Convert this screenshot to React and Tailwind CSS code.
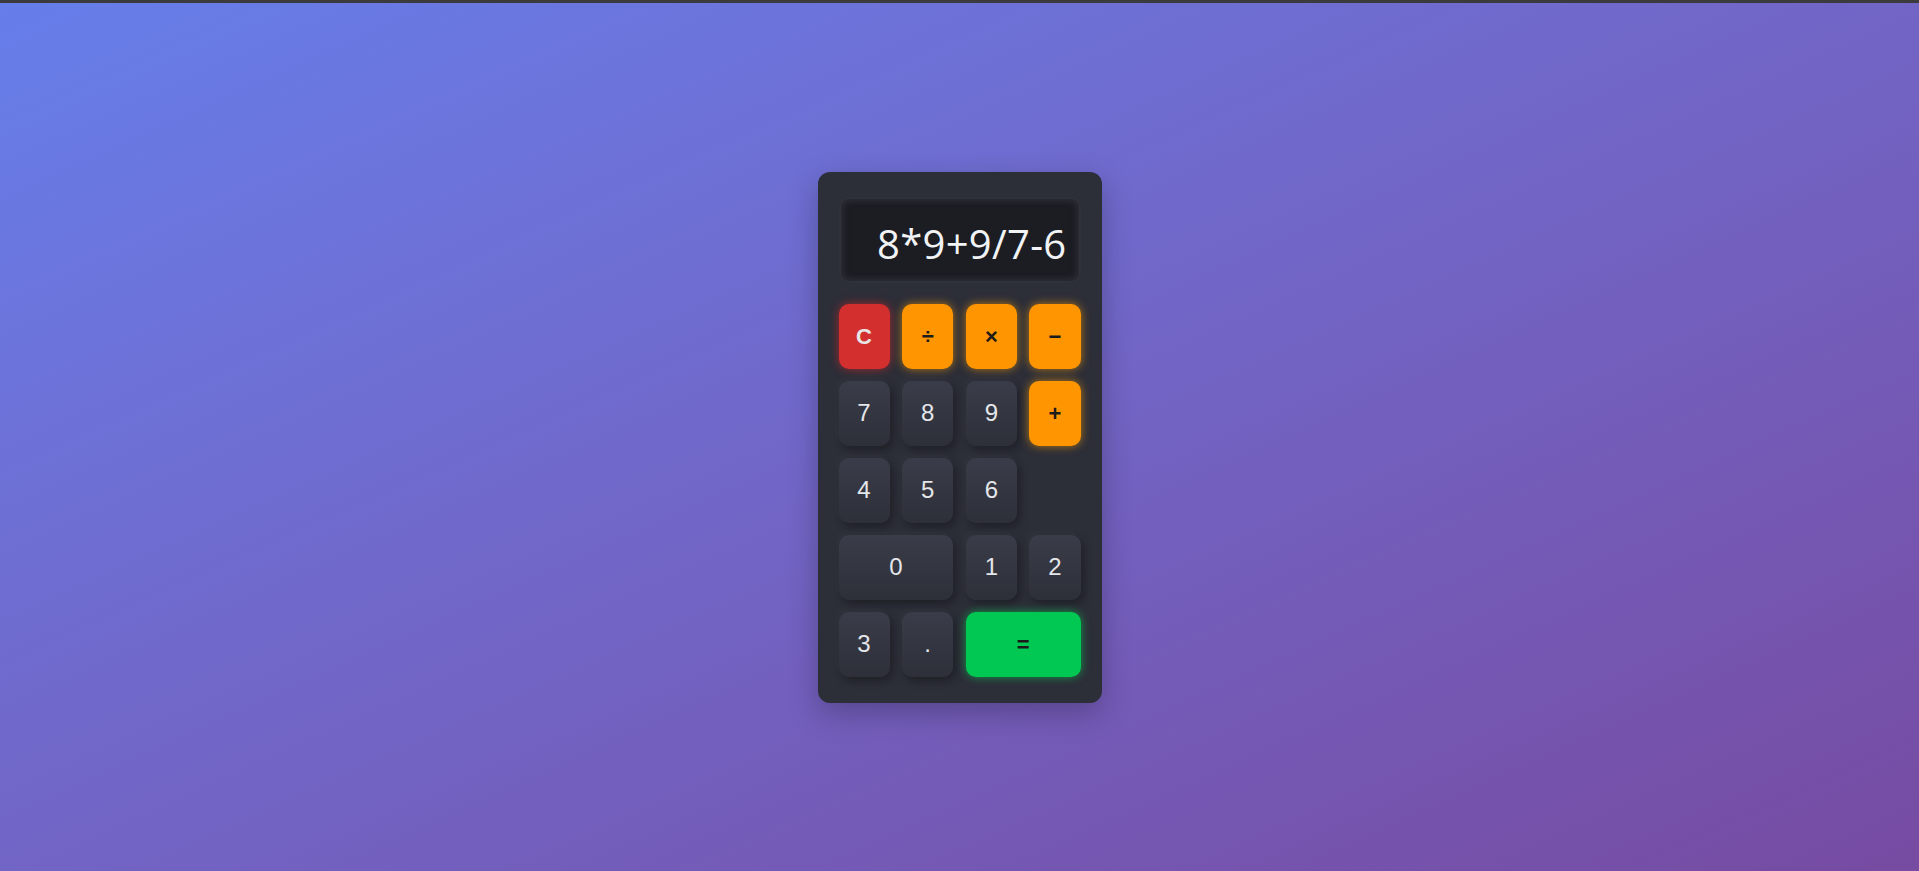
import React, { useState } from 'react';

const KEYS = [
  { label: 'C', kind: 'clear' },
  { label: '÷', kind: 'op', value: '/' },
  { label: '×', kind: 'op', value: '*' },
  { label: '−', kind: 'op', value: '-' },
  { label: '7' }, { label: '8' }, { label: '9' },
  { label: '+', kind: 'op', value: '+' },
  { label: '4' }, { label: '5' }, { label: '6' },
  { label: '', kind: 'blank' },
  { label: '0', wide: true }, { label: '1' }, { label: '2' },
  { label: '3' }, { label: '.' },
  { label: '=', kind: 'equals', wide: true },
];

const base = 'h-[65px] rounded-[10px] flex items-center justify-center select-none';

const styles = {
  num: 'bg-gradient-to-b from-[#3a3d49] to-[#2d3039] text-[#e4e6ea] text-[24px] font-["Liberation_Sans",Arial,sans-serif] shadow-[3px_4px_8px_rgba(0,0,0,0.3),-2px_-3px_6px_rgba(255,255,255,0.035)]',
  op: 'bg-[#ff9500] text-[#1b1b1b] text-[22px] font-bold font-["Liberation_Sans",Arial,sans-serif] shadow-[0_0_10px_rgba(255,160,0,0.65)]',
  clear: 'bg-[#d32f2f] text-[#e6e6e6] text-[22px] font-bold font-["Liberation_Sans",Arial,sans-serif] shadow-[0_0_10px_rgba(230,40,40,0.65)]',
  equals: 'bg-[#00c853] text-[#1b1b1b] text-[22px] font-bold font-["Liberation_Sans",Arial,sans-serif] shadow-[0_0_10px_rgba(0,220,90,0.6)]',
};

export default function App() {
  const [expr, setExpr] = useState('8*9+9/7-6');

  const press = (k) => {
    if (k.kind === 'clear') return setExpr('');
    if (k.kind === 'equals') {
      try {
        // eslint-disable-next-line no-new-func
        setExpr(String(Function(`return (${expr})`)()));
      } catch {
        setExpr('Error');
      }
      return;
    }
    setExpr((e) => e + (k.value || k.label));
  };

  return (
    <div className="min-h-screen border-t-[3px] border-[#3b3b3d] bg-gradient-to-br from-[#667eea] to-[#764ba2] flex items-center justify-center">
      <div className="w-[284px] bg-[#2c2e38] rounded-[12px] pt-[25px] px-[21px] pb-[26px] shadow-[0_10px_30px_rgba(0,0,0,0.25)]">
        <div className="h-[86px] rounded-[10px] border-[2px] border-[#30323a] bg-[#1b1d23] shadow-[inset_0_0_6px_2px_rgba(48,50,58,0.9)] flex items-center justify-end pr-[12px] pt-[9px] mb-[21px] overflow-hidden">
          <span className='text-[40px] leading-none tracking-[0.3px] text-[#f1f3f5] font-["Open_Sans",sans-serif] whitespace-nowrap'>{expr}</span>
        </div>

        <div className="grid grid-cols-4 gap-x-[12.67px] gap-y-[12px]">
          {KEYS.map((k, i) => {
            if (k.kind === 'blank') return <div key={i} />;
            const look = styles[k.kind || 'num'];
            return (
              <button key={i} onClick={() => press(k)} className={`${base} ${look} ${k.wide ? 'col-span-2' : ''}`}>
                {k.label}
              </button>
            );
          })}
        </div>
      </div>
    </div>
  );
}
